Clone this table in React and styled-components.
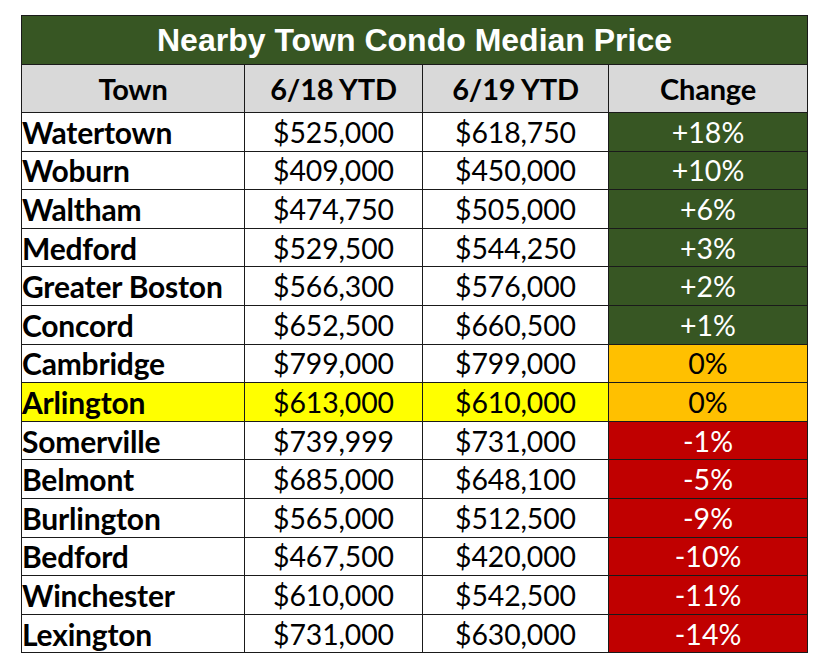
import React from "react";
import styled, { createGlobalStyle } from "styled-components";

const Global = createGlobalStyle`
  html, body { margin: 0; padding: 0; background: #ffffff; }
  body { font-family: Lato, "Open Sans", sans-serif; }
`;

const Page = styled.div`
  padding: 15px 0 0 21px;
`;

const Table = styled.table`
  border-collapse: collapse;
  table-layout: fixed;
  width: 786px;
  font-family: Lato, "Open Sans", sans-serif;
  color: #000;
`;

const TitleCell = styled.th`
  background: #375623;
  color: #ffffff;
  font-family: "Liberation Sans", Arial, sans-serif;
  font-size: 32px;
  font-weight: 700;
  height: 48px;
  line-height: 40px;
  padding: 0;
  border: 1px solid #1a1a1a;
  text-align: center;
`;

const HeadCell = styled.th`
  background: #d9d9d9;
  font-size: 29px;
  font-weight: 700;
  height: 47px;
  padding: 0;
  border: 1px solid #1a1a1a;
  text-align: center;
  letter-spacing: -0.2px;
`;

const TownCell = styled.td`
  background: ${(p) => (p.$hl ? "#ffff00" : "#ffffff")};
  font-size: 30px;
  font-weight: 700;
  height: 37.6px;
  line-height: 36px;
  padding: 0;
  border: 1px solid #1a1a1a;
  text-align: left;
  white-space: nowrap;
  letter-spacing: -0.2px;
`;

const PriceCell = styled.td`
  background: ${(p) => (p.$hl ? "#ffff00" : "#ffffff")};
  font-size: 28.4px;
  font-weight: 400;
  line-height: 36px;
  padding: 0;
  border: 1px solid #1a1a1a;
  text-align: center;
  letter-spacing: -0.1px;
`;

const toneBg = { up: "#375623", flat: "#ffc000", down: "#c00000" };
const toneFg = { up: "#ffffff", flat: "#000000", down: "#ffffff" };

const ChangeCell = styled.td`
  background: ${(p) => toneBg[p.$tone]};
  color: ${(p) => toneFg[p.$tone]};
  font-size: 28.5px;
  font-weight: 400;
  line-height: 36px;
  padding: 0;
  border: 1px solid #1a1a1a;
  text-align: center;
`;

const rows = [
  ["Watertown", "$525,000", "$618,750", "+18%", "up"],
  ["Woburn", "$409,000", "$450,000", "+10%", "up"],
  ["Waltham", "$474,750", "$505,000", "+6%", "up"],
  ["Medford", "$529,500", "$544,250", "+3%", "up"],
  ["Greater Boston", "$566,300", "$576,000", "+2%", "up"],
  ["Concord", "$652,500", "$660,500", "+1%", "up"],
  ["Cambridge", "$799,000", "$799,000", "0%", "flat"],
  ["Arlington", "$613,000", "$610,000", "0%", "flat", true],
  ["Somerville", "$739,999", "$731,000", "-1%", "down"],
  ["Belmont", "$685,000", "$648,100", "-5%", "down"],
  ["Burlington", "$565,000", "$512,500", "-9%", "down"],
  ["Bedford", "$467,500", "$420,000", "-10%", "down"],
  ["Winchester", "$610,000", "$542,500", "-11%", "down"],
  ["Lexington", "$731,000", "$630,000", "-14%", "down"],
];

export default function App() {
  return (
    <Page>
      <Global />
      <Table>
        <colgroup>
          <col style={{ width: 223 }} />
          <col style={{ width: 178 }} />
          <col style={{ width: 186 }} />
          <col style={{ width: 199 }} />
        </colgroup>
        <thead>
          <tr>
            <TitleCell colSpan={4}>Nearby Town Condo Median Price</TitleCell>
          </tr>
          <tr>
            <HeadCell>Town</HeadCell>
            <HeadCell>6/18 YTD</HeadCell>
            <HeadCell>6/19 YTD</HeadCell>
            <HeadCell>Change</HeadCell>
          </tr>
        </thead>
        <tbody>
          {rows.map(([town, a, b, c, tone, hl]) => (
            <tr key={town}>
              <TownCell $hl={hl}>{town}</TownCell>
              <PriceCell $hl={hl}>{a}</PriceCell>
              <PriceCell $hl={hl}>{b}</PriceCell>
              <ChangeCell $tone={tone}>{c}</ChangeCell>
            </tr>
          ))}
        </tbody>
      </Table>
    </Page>
  );
}
